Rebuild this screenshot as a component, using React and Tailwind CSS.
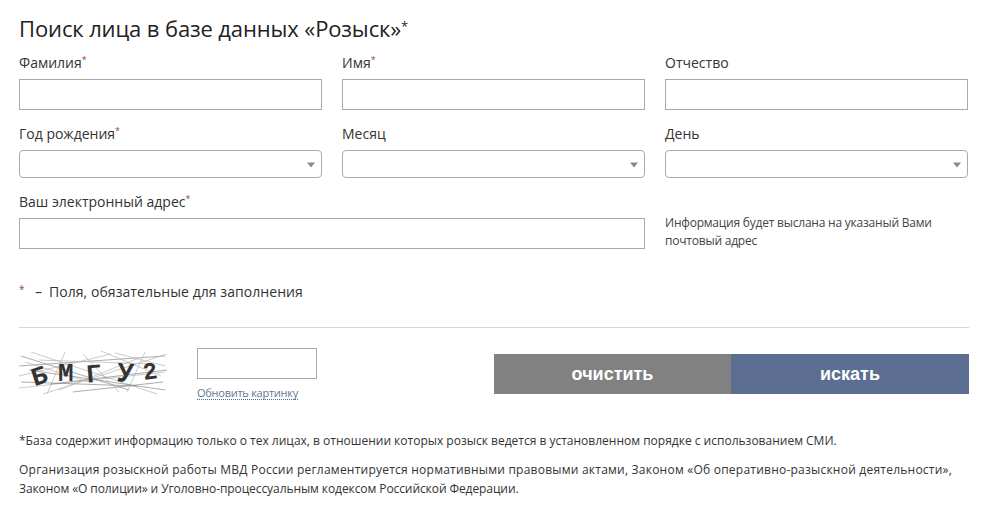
const F = { fontFamily: '"Open Sans", "Noto Sans", sans-serif' };

function Req() {
  return <span className="text-[#a33c3c] text-[9px] align-[5px] leading-none">*</span>;
}

function Label({ children, req }) {
  return (
    <div className="h-[17px] leading-[17px] text-[14px] text-[#333]">
      {children}
      {req && <Req />}
    </div>
  );
}

function TextField({ label, req }) {
  return (
    <div className="flex flex-col">
      <Label req={req}>{label}</Label>
      <input className="mt-[8px] h-[31px] w-full border border-[#a9a9a9] bg-white outline-none" />
    </div>
  );
}

function SelectField({ label, req }) {
  return (
    <div className="flex flex-col">
      <Label req={req}>{label}</Label>
      <div className="relative mt-[8px] h-[28px] w-full rounded-[4px] border border-[#a9a9a9] bg-white">
        <svg className="absolute right-[6px] top-[11px]" width="8" height="6" viewBox="0 0 8 6">
          <path d="M0 0.5h8L4 5.5z" fill="#8a8a8a" />
        </svg>
      </div>
    </div>
  );
}

function Captcha() {
  const lines = [
    "M0 18L146 8", "M0 40L146 24", "M12 4L138 46", "M2 8L110 42", "M24 46L148 6", "M0 28L92 6",
    "M54 44L144 34", "M46 4L28 46", "M126 4L108 44", "M10 22L146 42", "M82 3L142 28", "M20 12L132 16",
    "M2 34L118 38", "M64 6L100 44", "M96 5L146 18", "M32 36L148 22", "M6 14L70 34", "M40 42L120 10",
  ];
  return (
    <svg width="150" height="50" viewBox="0 0 150 50" className="w-[150px] h-[50px] shrink-0">
      {lines.map((d, i) => (
        <path key={i} d={d} stroke={i % 3 ? "#b5b5b5" : "#8a8a8a"} strokeWidth="0.7" fill="none" />
      ))}
      <g fill="#333" fontFamily='"Liberation Mono", monospace' fontWeight="700" fontSize="26">
        <text x="12" y="36" transform="rotate(-18 21 26)">Б</text>
        <text x="39" y="33">М</text>
        <text x="67" y="34" transform="rotate(-5 76 26)">Г</text>
        <text x="98" y="34" fontSize="28" transform="rotate(4 108 26)">У</text>
        <text x="124" y="31" fontSize="24" transform="rotate(-8 132 24)">2</text>
      </g>
    </svg>
  );
}

export default function App() {
  return (
    <div className="w-[997px] h-[509px] bg-white overflow-hidden pl-[19px] pr-[28px] text-[#333]" style={F}>
      <h1 className="pt-[13px] h-[54px] text-[22px] leading-[30px] tracking-[-0.12px] text-[#222] font-normal">
        Поиск лица в базе данных «Розыск»<span className="text-[13px] align-[6px] leading-none">*</span>
      </h1>

      <div className="grid w-[949px] grid-cols-3 gap-x-[20px] gap-y-[15px]">
        <TextField label="Фамилия" req />
        <TextField label="Имя" req />
        <TextField label="Отчество" />
        <SelectField label="Год рождения" req />
        <SelectField label="Месяц" />
        <SelectField label="День" />
      </div>

      <div className="mt-[15px] grid w-[949px] grid-cols-3 gap-x-[20px]">
        <div className="col-span-2">
          <TextField label="Ваш электронный адрес" req />
        </div>
        <p className="pt-[21px] text-[12px] leading-[18px] text-[#444] tracking-[-0.22px]">
          Информация будет выслана на указаный Вами почтовый адрес
        </p>
      </div>

      <div className="mt-[33px] flex h-[18px] items-center text-[14px] leading-[18px] tracking-[0.06px]">
        <span className="w-[16px] -translate-y-[3px] text-[10px] text-[#a33c3c]">*</span>
        <span className="w-[14px]">–</span>
        <span>Поля, обязательные для заполнения</span>
      </div>

      <div className="mt-[26px] border-t border-[#d6d6d6]" />

      <div className="mt-[20px] flex items-start">
        <Captcha />
        <div className="ml-[28px] w-[120px] shrink-0">
          <input className="block h-[31px] w-full border border-[#a9a9a9] bg-white outline-none" />
          <a className="mt-[6px] inline-block border-b border-dotted border-[#4a6a94] text-[11px] leading-[13px] tracking-[-0.26px] text-[#5f7797]">
            Обновить картинку
          </a>
        </div>
        <div className="ml-[177px] mt-[6px] flex h-[40px] flex-1">
          <button
            className="h-full w-[237px] bg-[#818181] pt-[1px] text-[18px] font-bold lowercase text-white"
            style={{ fontFamily: '"Liberation Sans", Arial, sans-serif' }}
          >
            очистить
          </button>
          <button
            className="h-full flex-1 bg-[#5c6f92] pt-[1px] text-[18px] font-bold lowercase text-white"
            style={{ fontFamily: '"Liberation Sans", Arial, sans-serif' }}
          >
            искать
          </button>
        </div>
      </div>

      <p className="mt-[28px] whitespace-nowrap text-[12px] leading-[19px] text-[#333]">
        *База содержит информацию только о тех лицах, в отношении которых розыск ведется в установленном порядке с использованием СМИ.
      </p>
      <p className="mt-[10px] whitespace-nowrap text-[12px] leading-[19px] text-[#333]">
        <span className="block tracking-[0.23px]">
          Организация розыскной работы МВД России регламентируется нормативными правовыми актами, Законом «Об оперативно-разыскной деятельности»,
        </span>
        <span className="block tracking-[-0.08px]">
          Законом «О полиции» и Уголовно-процессуальным кодексом Российской Федерации.
        </span>
      </p>
    </div>
  );
}
